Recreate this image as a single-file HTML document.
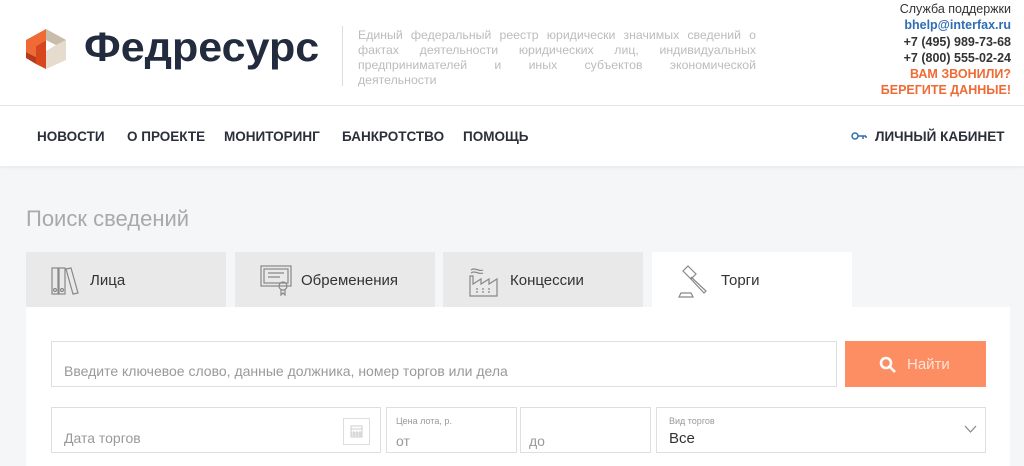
<!DOCTYPE html>
<html><head><meta charset="utf-8"><style>
*{margin:0;padding:0;box-sizing:border-box}
body{width:1024px;height:466px;overflow:hidden;background:#f5f6f8;font-family:"Liberation Sans","DejaVu Sans",sans-serif;position:relative}
.a{position:absolute}
#hdr{left:0;top:0;width:1024px;height:106px;background:#fff;border-bottom:1px solid #e6e6e6}
#nav{left:0;top:106px;width:1024px;height:60px;background:#fff;box-shadow:0 2px 3px rgba(0,0,0,.05)}
.nv{top:129px;font-size:13.5px;font-weight:bold;color:#2a2f3a}
.tab{top:252px;height:55px;background:#e9e9e9;font-size:15px;color:#333}
.tab span{position:absolute;top:20px}
.box{background:#fff;border:1px solid #dcdfe3}
.ph{color:#999;font-size:14px}
.sm{font-size:9px;color:#999}
.j{display:block;text-align:justify;text-align-last:justify;height:15px}
</style></head><body>
<div id="hdr" class="a"></div>
<svg class="a" style="left:24px;top:27px" width="44" height="44" viewBox="0 0 44 44">
<polygon points="22,2 42,13 42,33 22,42 22,24 32,18 22,13" fill="#e6dccd"/>
<polygon points="22,2 42,13 32,18 22,13" fill="#c9bcab"/>
<polygon points="2,13 22,2 22,13 12,19 12,30 2,25" fill="#f06a35"/>
<polygon points="12,19 22,13 22,42 12,37" fill="#d8461d"/>
<polygon points="2,25 12,30 12,37 2,31" fill="#b93a18"/>
</svg>
<div class="a" style="left:84px;top:24px;font-size:41px;font-weight:bold;color:#232c3f;transform:scaleX(1.05);transform-origin:left">Федресурс</div>
<div class="a" style="left:342px;top:26px;width:1px;height:60px;background:#ddd"></div>
<div class="a" style="left:358px;top:28px;width:398px;font-size:12.3px;line-height:15px;color:#bcbcbc">
<span class="j">Единый федеральный реестр юридически значимых сведений о</span>
<span class="j">фактах деятельности юридических лиц, индивидуальных</span>
<span class="j">предпринимателей и иных субъектов экономической</span>
<span style="display:block">деятельности</span></div>
<div class="a" style="right:13px;top:1px;text-align:right;font-size:12.5px;line-height:16.3px;color:#333">
<div>Служба поддержки</div>
<div style="color:#2f6db5;font-weight:bold">bhelp@interfax.ru</div>
<div style="font-weight:bold">+7 (495) 989-73-68</div>
<div style="font-weight:bold">+7 (800) 555-02-24</div>
<div style="color:#f06a35;font-weight:bold">ВАМ ЗВОНИЛИ?</div>
<div style="color:#f06a35;font-weight:bold">БЕРЕГИТЕ ДАННЫЕ!</div>
</div>
<div id="nav" class="a"></div>
<div class="a nv" style="left:37px">НОВОСТИ</div>
<div class="a nv" style="left:127px">О ПРОЕКТЕ</div>
<div class="a nv" style="left:224px">МОНИТОРИНГ</div>
<div class="a nv" style="left:342px">БАНКРОТСТВО</div>
<div class="a nv" style="left:463px">ПОМОЩЬ</div>
<svg class="a" style="left:851px;top:131px" width="16" height="10"><circle cx="4" cy="5" r="3" fill="none" stroke="#2f6db5" stroke-width="1.5"/><path d="M7 5h8M12 5v3M15 5v2" stroke="#2f6db5" stroke-width="1.5"/></svg>
<div class="a nv" style="left:875px">ЛИЧНЫЙ КАБИНЕТ</div>
<div class="a" style="left:26px;top:206px;font-size:22px;color:#a9a9a9">Поиск сведений</div>
<div class="a" style="left:26px;top:307px;width:984px;height:159px;background:#fff"></div>
<div class="a tab" style="left:26px;width:200px"><svg class="a" style="left:24px;top:14px" width="30" height="30" fill="none" stroke="#888" stroke-width="1.2"><rect x="2" y="2" width="6" height="26"/><rect x="9" y="2" width="6" height="26"/><path d="M16 3l5-1 7 25-5 1z"/><circle cx="5" cy="24" r="1.5"/><circle cx="12" cy="24" r="1.5"/></svg><span style="left:64px">Лица</span></div>
<div class="a tab" style="left:235px;width:200px"><svg class="a" style="left:24px;top:12px" width="34" height="32" fill="none" stroke="#888" stroke-width="1.2"><rect x="2" y="2" width="30" height="20"/><rect x="5" y="5" width="24" height="14"/><path d="M9 9h16M9 13h12"/><circle cx="24" cy="22" r="4"/><path d="M22 26v5l2-2 2 2v-5"/></svg><span style="left:66px">Обременения</span></div>
<div class="a tab" style="left:443px;width:200px"><svg class="a" style="left:24px;top:12px" width="34" height="34" fill="none" stroke="#888" stroke-width="1.2"><path d="M3 32V12h3v8l8-5v5l8-5v5l8-5v17z"/><path d="M4 6c4-3 8 2 12 0M4 9c4-3 8 2 12 0"/><path d="M9 25h2M15 25h2M21 25h2M9 28h2M15 28h2M21 28h2"/></svg><span style="left:67px">Концессии</span></div>
<div class="a tab" style="left:652px;width:200px;background:#fff"><svg class="a" style="left:24px;top:11px" width="36" height="36" fill="none" stroke="#888" stroke-width="1.2"><path d="M12 3l8 8-5 5-8-8z"/><path d="M15 14l15 14-2 2-14-15"/><path d="M3 34h14l-2-4H5z"/></svg><span style="left:69px">Торги</span></div>
<div class="a box" style="left:51px;top:341px;width:786px;height:46px"></div>
<div class="a ph" style="left:64px;top:363px">Введите ключевое слово, данные должника, номер торгов или дела</div>
<div class="a" style="left:845px;top:341px;width:141px;height:46px;background:#fd8e64"></div>
<svg class="a" style="left:879px;top:356px" width="18" height="18" fill="none" stroke="#fff" stroke-width="2.6"><circle cx="7" cy="7" r="5"/><path d="M11 11l5 5"/></svg>
<div class="a" style="left:907px;top:356px;font-size:15px;color:#fde3d7">Найти</div>
<div class="a box" style="left:51px;top:407px;width:330px;height:46px"></div>
<div class="a ph" style="left:64px;top:430px">Дата торгов</div>
<div class="a" style="left:343px;top:418px;width:27px;height:27px;border:1px solid #ddd"></div>
<svg class="a" style="left:350px;top:424px" width="13" height="14" fill="none" stroke="#ccc" stroke-width="1"><rect x="1" y="2" width="11" height="11"/><path d="M1 5h11M4 7v6M7 7v6M10 7v6M1 9h11M1 11h11"/></svg>
<div class="a box" style="left:386px;top:407px;width:131px;height:46px"></div>
<div class="a sm" style="left:396px;top:416px">Цена лота, р.</div>
<div class="a ph" style="left:396px;top:433px">от</div>
<div class="a box" style="left:520px;top:407px;width:131px;height:46px"></div>
<div class="a ph" style="left:529px;top:433px">до</div>
<div class="a box" style="left:656px;top:407px;width:330px;height:46px"></div>
<div class="a sm" style="left:669px;top:416px">Вид торгов</div>
<div class="a" style="left:669px;top:430px;font-size:15px;color:#333">Все</div>
<svg class="a" style="left:964px;top:425px" width="13" height="9" fill="none" stroke="#888" stroke-width="1.2"><path d="M1 1l5.5 6L12 1"/></svg>
</body></html>
